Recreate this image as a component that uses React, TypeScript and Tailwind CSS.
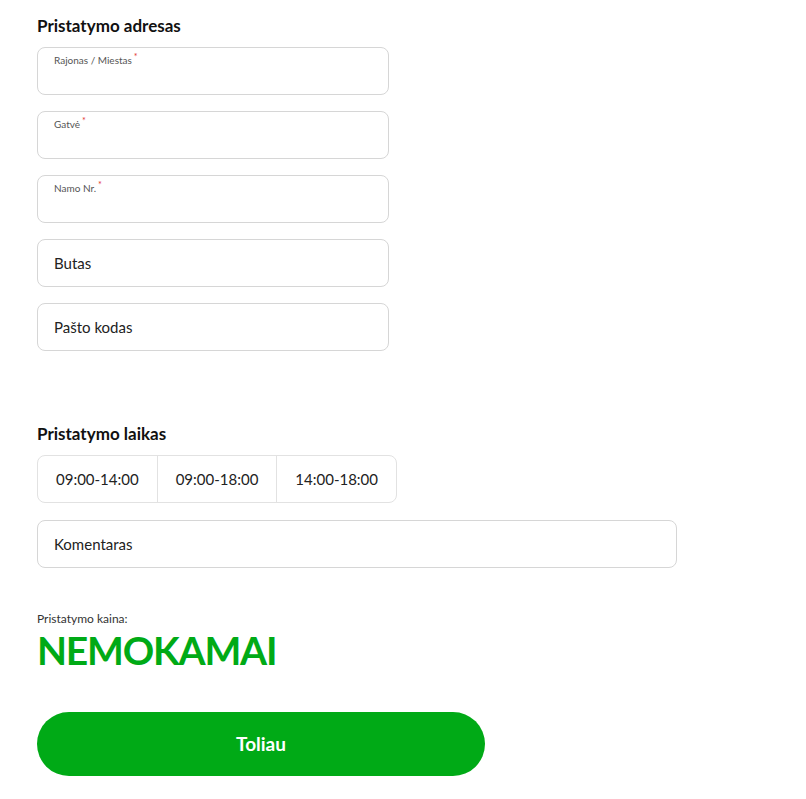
const font = { fontFamily: "Lato, 'Noto Sans', sans-serif" };

function FloatingField({ label }: { label: string }) {
  return (
    <div className="relative h-[48px] w-[352px] rounded-lg border border-[#d6d6d6] bg-white">
      <span className="absolute left-[16px] top-[6px] text-[10px] leading-[12px] text-[#555]">
        {label}
        <sup className="ml-[2px] text-[9px] text-[#e3342f]">*</sup>
      </span>
    </div>
  );
}

function PlainField({ label, wide }: { label: string; wide?: boolean }) {
  return (
    <div
      className={`flex h-[48px] items-center rounded-lg border border-[#d6d6d6] bg-white px-[16px] text-[15px] text-[#222] ${
        wide ? "w-[640px]" : "w-[352px]"
      }`}
    >
      {label}
    </div>
  );
}

const SLOTS = ["09:00-14:00", "09:00-18:00", "14:00-18:00"];

export default function App() {
  return (
    <div className="min-h-screen bg-white pl-[37px] pt-[14px]" style={font}>
      <h2 className="text-[17px] font-bold leading-[24px] text-[#111]">Pristatymo adresas</h2>
      <div className="mt-[9px] flex flex-col gap-[16px]">
        <FloatingField label="Rajonas / Miestas" />
        <FloatingField label="Gatvė" />
        <FloatingField label="Namo Nr." />
        <PlainField label="Butas" />
        <PlainField label="Pašto kodas" />
      </div>

      <h2 className="mt-[71px] text-[17px] font-bold leading-[24px] text-[#111]">Pristatymo laikas</h2>
      <div className="mt-[9px] flex h-[48px] w-[360px] overflow-hidden rounded-lg border border-[#e2e2e2]">
        {SLOTS.map((s, i) => (
          <div
            key={s}
            className={`flex flex-1 items-center justify-center text-[15px] text-[#222] ${
              i > 0 ? "border-l border-[#e2e2e2]" : ""
            }`}
          >
            {s}
          </div>
        ))}
      </div>

      <div className="mt-[17px]">
        <PlainField label="Komentaras" wide />
      </div>

      <p className="mt-[44px] text-[12px] leading-[14px] text-[#333]">Pristatymo kaina:</p>
      <p className="mt-[2px] text-[39px] font-bold leading-[44px] tracking-[-1.2px] text-[#00aa16]">NEMOKAMAI</p>

      <button className="mt-[40px] flex h-[64px] w-[448px] items-center justify-center rounded-full bg-[#00aa16] text-[19px] font-bold text-white">
        Toliau
      </button>
    </div>
  );
}
